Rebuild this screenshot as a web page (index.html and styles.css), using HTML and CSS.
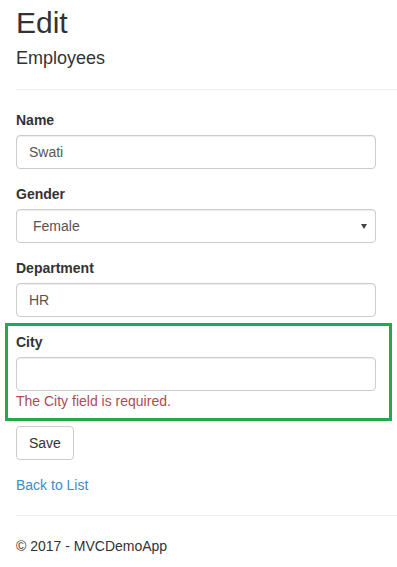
FILE: index.html
```html
<!DOCTYPE html>
<html lang="en">
<head>
<meta charset="utf-8">
<title>Edit - MVCDemoApp</title>
<link rel="stylesheet" href="styles.css">
</head>
<body>
<div class="body-content">
  <h2 class="page-title">Edit</h2>
  <form class="form-horizontal">
    <h4 class="entity-title">Employees</h4>
    <hr class="divider">
    <div class="form-group">
      <label class="control-label" for="Name">Name</label>
      <input class="form-control" id="Name" type="text" value="Swati">
    </div>
    <div class="form-group">
      <label class="control-label" for="Gender">Gender</label>
      <div class="select-wrap">
        <select class="form-control form-select" id="Gender">
          <option>Female</option>
          <option>Male</option>
        </select>
      </div>
    </div>
    <div class="form-group form-group-before-highlight">
      <label class="control-label" for="Department">Department</label>
      <input class="form-control" id="Department" type="text" value="HR">
    </div>
    <div class="highlight">
      <div class="form-group form-group-last">
        <label class="control-label" for="City">City</label>
        <input class="form-control" id="City" type="text" value="">
        <span class="field-validation-error">The City field is required.</span>
      </div>
    </div>
    <div class="form-group">
      <button type="button" class="btn">Save</button>
    </div>
  </form>
  <div class="back-link"><a href="#">Back to List</a></div>
  <hr class="divider footer-divider">
  <footer class="footer">
    <p>&copy; 2017 - MVCDemoApp</p>
  </footer>
</div>
</body>
</html>
```

FILE: styles.css
```css
* {
  box-sizing: border-box;
}

html, body {
  margin: 0;
  padding: 0;
  background: #fff;
}

body {
  font-family: "Liberation Sans", Arial, sans-serif;
  font-size: 14px;
  line-height: 20px;
  color: #333;
}

.body-content {
  padding: 0 0 0 16px;
}

.page-title {
  font-size: 30px;
  line-height: 33px;
  font-weight: normal;
  margin: 6px 0 10px;
}

.form-horizontal {
  margin: 0;
}

.entity-title {
  font-size: 18px;
  line-height: 19.8px;
  font-weight: normal;
  margin: 10px 0;
}

.divider {
  border: 0;
  border-top: 1px solid #eee;
  margin: 20px 0;
  height: 0;
}

.form-group {
  margin-bottom: 15px;
}

.form-group-before-highlight {
  margin-bottom: 6px;
}

.form-group-last {
  margin-bottom: 0;
}

.control-label {
  display: block;
  font-weight: bold;
  line-height: 20px;
  margin-bottom: 5px;
}

.form-control {
  display: block;
  width: 360px;
  height: 34px;
  padding: 6px 12px;
  font-family: inherit;
  font-size: 14px;
  line-height: 20px;
  color: #555;
  background: #fff;
  border: 1px solid #ccc;
  border-radius: 4px;
  box-shadow: inset 0 1px 1px rgba(0, 0, 0, 0.075);
  margin: 0;
}

.select-wrap {
  position: relative;
  width: 360px;
}

.form-select {
  -webkit-appearance: none;
  appearance: none;
  padding-left: 16px;
}

.select-wrap::after {
  content: "";
  position: absolute;
  right: 9px;
  top: 15px;
  width: 0;
  height: 0;
  border-left: 3px solid transparent;
  border-right: 3px solid transparent;
  border-top: 5px solid #444;
  pointer-events: none;
}

.highlight {
  border: 3px solid #21a94b;
  margin: 0 0 5px -11px;
  width: 387px;
  padding: 6px 13px 7px 8px;
}

.field-validation-error {
  display: block;
  color: #b04a55;
  line-height: 20px;
}

.btn {
  display: inline-block;
  height: 34px;
  padding: 6px 12px;
  font-family: inherit;
  font-size: 14px;
  line-height: 20px;
  color: #333;
  background: #fff;
  border: 1px solid #ccc;
  border-radius: 4px;
  margin: 0;
}

.back-link {
  line-height: 20px;
}

.back-link a {
  color: #428bca;
  text-decoration: none;
}

.footer p {
  margin: 0 0 10px;
}
```
